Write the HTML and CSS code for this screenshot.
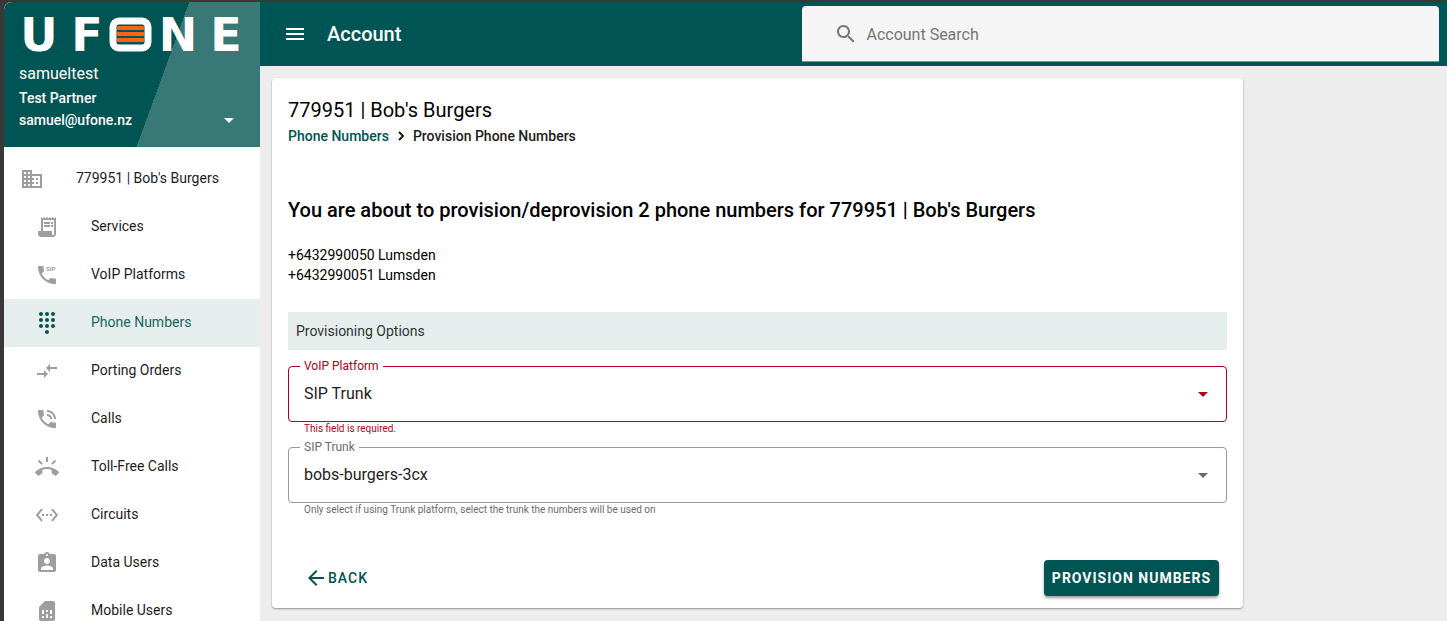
FILE: index.html
```
<!DOCTYPE html>
<html lang="en">
<head>
    <meta charset="UTF-8">
    <meta name="viewport" content="width=device-width, initial-scale=1.0">
    <title>Account</title>
    <link rel="stylesheet" href="styles.css">
</head>
<body>
    <div class="app">
        <aside class="sidebar">
            <div class="profile">
                <svg class="logo" viewBox="0 0 226 36" role="img" aria-label="UFONE">
                    <g class="logo-text">
                        <text x="20" y="35">U</text>
                        <text x="68" y="35">F</text>
                        <text x="159" y="35">N</text>
                        <text x="207" y="35">E</text>
                    </g>
                    <rect x="94" y="5" width="35" height="27" rx="6" fill="none" stroke="#fff" stroke-width="7"/>
                    <g fill="#ff6319">
                        <rect x="98" y="10" width="27" height="4" rx="1"/>
                        <rect x="98" y="16" width="27" height="4" rx="1"/>
                        <rect x="98" y="22" width="27" height="4" rx="1"/>
                    </g>
                </svg>
                <div class="profile-name">samueltest</div>
                <div class="profile-line">Test Partner</div>
                <button class="profile-line profile-menu" type="button">
                    samuel@ufone.nz
                    <svg class="icon" viewBox="0 0 24 24"><path d="M7 10l5 5 5-5z"/></svg>
                </button>
            </div>

            <nav class="nav">
                <a class="nav-item nav-root" href="#">
                    <svg class="icon" viewBox="0 0 24 24"><path d="M12 7V3H2v18h20V7H12zM6 19H4v-2h2v2zm0-4H4v-2h2v2zm0-4H4V9h2v2zm0-4H4V5h2v2zm4 12H8v-2h2v2zm0-4H8v-2h2v2zm0-4H8V9h2v2zm0-4H8V5h2v2zm10 12h-8v-2h2v-2h-2v-2h2v-2h-2V9h8v10zm-2-8h-2v2h2v-2zm0 4h-2v2h2v-2z"/></svg>
                    <span>779951 | Bob's Burgers</span>
                </a>
                <a class="nav-item" href="#">
                    <svg class="icon" viewBox="0 0 24 24"><path d="M19.5 3.5L18 2l-1.5 1.5L15 2l-1.5 1.5L12 2l-1.5 1.5L9 2 7.5 3.5 6 2v14H3v3c0 1.66 1.34 3 3 3h12c1.66 0 3-1.34 3-3V2l-1.5 1.5zM19 19c0 .55-.45 1-1 1s-1-.45-1-1v-3H8V5h11v14z"/><path d="M9 7h6v2H9zM16 7h2v2h-2zM9 10h6v2H9zM16 10h2v2h-2z"/></svg>
                    <span>Services</span>
                </a>
                <a class="nav-item" href="#">
                    <svg class="icon" viewBox="0 0 24 24"><path d="M20 15.5c-1.25 0-2.45-.2-3.57-.57-.35-.11-.74-.03-1.01.24l-2.2 2.2c-2.83-1.44-5.15-3.75-6.59-6.59l2.2-2.21c.27-.26.35-.65.24-1C8.7 6.45 8.5 5.25 8.5 4c0-.55-.45-1-1-1H4c-.55 0-1 .45-1 1 0 9.39 7.61 17 17 17 .55 0 1-.45 1-1v-3.5c0-.55-.45-1-1-1z"/><text class="icon-text" x="11" y="8">SIP</text></svg>
                    <span>VoIP Platforms</span>
                </a>
                <a class="nav-item active" href="#">
                    <svg class="icon" viewBox="0 0 24 24"><circle cx="6" cy="3" r="2"/><circle cx="12" cy="3" r="2"/><circle cx="18" cy="3" r="2"/><circle cx="6" cy="9" r="2"/><circle cx="12" cy="9" r="2"/><circle cx="18" cy="9" r="2"/><circle cx="6" cy="15" r="2"/><circle cx="12" cy="15" r="2"/><circle cx="18" cy="15" r="2"/><circle cx="12" cy="21" r="2"/></svg>
                    <span>Phone Numbers</span>
                </a>
                <a class="nav-item" href="#">
                    <svg class="icon" viewBox="0 0 24 24"><path d="M9.01 14H2v2h7.01v3L13 15l-3.99-4v3zm5.98-1v-3H22V8h-7.01V5L11 9l3.99 4z"/></svg>
                    <span>Porting Orders</span>
                </a>
                <a class="nav-item" href="#">
                    <svg class="icon" viewBox="0 0 24 24"><path d="M20 15.5c-1.25 0-2.45-.2-3.57-.57-.35-.11-.74-.03-1.02.24l-2.2 2.2c-2.83-1.44-5.15-3.75-6.59-6.58l2.2-2.21c.28-.27.36-.66.25-1.01C8.7 6.45 8.5 5.25 8.5 4c0-.55-.45-1-1-1H4c-.55 0-1 .45-1 1 0 9.39 7.61 17 17 17 .55 0 1-.45 1-1v-3.5c0-.55-.45-1-1-1zM19 12h2c0-4.97-4.03-9-9-9v2c3.87 0 7 3.13 7 7zm-4 0h2c0-2.76-2.24-5-5-5v2c1.66 0 3 1.34 3 3z"/></svg>
                    <span>Calls</span>
                </a>
                <a class="nav-item" href="#">
                    <svg class="icon" viewBox="0 0 24 24"><path d="M23.71 16.67C20.66 13.78 16.54 12 12 12 7.46 12 3.34 13.78.29 16.67c-.18.18-.29.43-.29.71 0 .28.11.53.29.71l2.48 2.48c.18.18.43.29.71.29.27 0 .52-.11.7-.28.79-.74 1.69-1.36 2.66-1.85.33-.16.56-.5.56-.9v-3.1c1.45-.48 3-.73 4.6-.73 1.6 0 3.15.25 4.6.72v3.1c0 .39.23.74.56.9.98.49 1.87 1.12 2.67 1.85.18.18.43.28.7.28.28 0 .53-.11.71-.29l2.48-2.48c.18-.18.29-.43.29-.71 0-.28-.12-.52-.3-.7zM21.16 6.26l-1.41-1.41-3.56 3.55 1.41 1.41s3.45-3.52 3.56-3.55zM13 2h-2v5h2V2zM6.4 9.81L7.81 8.4 4.26 4.84 2.84 6.26c.11.03 3.56 3.55 3.56 3.55z"/></svg>
                    <span>Toll-Free Calls</span>
                </a>
                <a class="nav-item" href="#">
                    <svg class="icon" viewBox="0 0 24 24"><path d="M7.77 6.76L6.23 5.48.82 12l5.41 6.52 1.54-1.28L3.42 12l4.35-5.24zM7 13h2v-2H7v2zm10-2h-2v2h2v-2zm-6 2h2v-2h-2v2zm6.77-7.52l-1.54 1.28L20.58 12l-4.35 5.24 1.54 1.28L23.18 12l-5.41-6.52z"/></svg>
                    <span>Circuits</span>
                </a>
                <a class="nav-item" href="#">
                    <svg class="icon" viewBox="0 0 24 24"><path d="M19 3h-4.18C14.4 1.84 13.3 1 12 1c-1.3 0-2.4.84-2.82 2H5c-1.1 0-2 .9-2 2v14c0 1.1.9 2 2 2h14c1.1 0 2-.9 2-2V5c0-1.1-.9-2-2-2zm-7 0c.55 0 1 .45 1 1s-.45 1-1 1-1-.45-1-1 .45-1 1-1zm0 4c1.66 0 3 1.34 3 3s-1.34 3-3 3-3-1.34-3-3 1.34-3 3-3zm6 12H6v-1.4c0-2 4-3.1 6-3.1s6 1.1 6 3.1V19z"/></svg>
                    <span>Data Users</span>
                </a>
                <a class="nav-item" href="#">
                    <svg class="icon" viewBox="0 0 24 24"><path d="M19.99 4c0-1.1-.89-2-1.99-2h-8L4 8v12c0 1.1.9 2 2 2h12.01c1.1 0 1.99-.9 1.99-2l-.01-16zM9 19H7v-2h2v2zm8 0h-2v-2h2v2zm-8-4H7v-4h2v4zm4 4h-2v-4h2v4zm0-6h-2v-2h2v2zm4 2h-2v-4h2v4z"/></svg>
                    <span>Mobile Users</span>
                </a>
            </nav>
        </aside>

        <div class="page">
            <header class="topbar">
                <button class="menu-btn" type="button" aria-label="Menu">
                    <svg class="icon" viewBox="0 0 24 24"><path d="M3 18h18v-2H3v2zm0-5h18v-2H3v2zm0-7v2h18V6H3z"/></svg>
                </button>
                <h1 class="topbar-title">Account</h1>
                <label class="search">
                    <svg class="icon" viewBox="0 0 24 24"><path d="M15.5 14h-.79l-.28-.27C15.41 12.59 16 11.11 16 9.5 16 5.91 13.09 3 9.5 3S3 5.91 3 9.5 5.91 16 9.5 16c1.61 0 3.09-.59 4.23-1.57l.27.28v.79l5 4.99L20.49 19l-4.99-5zm-6 0C7.01 14 5 11.99 5 9.5S7.01 5 9.5 5 14 7.01 14 9.5 11.99 14 9.5 14z"/></svg>
                    <input class="search-input" type="text" placeholder="Account Search" aria-label="Account Search">
                </label>
            </header>

            <main class="content">
                <form class="card">
                    <h2 class="card-title">779951 | Bob's Burgers</h2>
                    <div class="breadcrumb">
                        <a href="#">Phone Numbers</a>
                        <svg class="chevron" viewBox="0 0 8 12"><path d="M2 2l4 4-4 4"/></svg>
                        <span>Provision Phone Numbers</span>
                    </div>

                    <h3 class="summary">You are about to provision/deprovision 2 phone numbers for 779951 | Bob's Burgers</h3>
                    <ul class="numbers">
                        <li>+6432990050 Lumsden</li>
                        <li>+6432990051 Lumsden</li>
                    </ul>

                    <div class="section-title">Provisioning Options</div>

                    <div class="field invalid">
                        <div class="field-box">
                            <label class="field-label" for="platform">VoIP Platform</label>
                            <select class="field-select" id="platform">
                                <option>SIP Trunk</option>
                            </select>
                            <svg class="field-arrow" viewBox="0 0 10 5"><path d="M0 0h10L5 5z"/></svg>
                        </div>
                        <div class="helper">This field is required.</div>
                    </div>
                    <div class="field">
                        <div class="field-box">
                            <label class="field-label" for="trunk">SIP Trunk</label>
                            <select class="field-select" id="trunk">
                                <option>bobs-burgers-3cx</option>
                            </select>
                            <svg class="field-arrow" viewBox="0 0 10 5"><path d="M0 0h10L5 5z"/></svg>
                        </div>
                        <div class="helper">Only select if using Trunk platform, select the trunk the numbers will be used on</div>
                    </div>

                    <div class="actions">
                        <button class="btn btn-text" type="button">
                            <svg class="icon" viewBox="0 0 24 24"><path d="M20 11H7.83l5.59-5.59L12 4l-8 8 8 8 1.41-1.41L7.83 13H20v-2z"/></svg>
                            BACK
                        </button>
                        <button class="btn btn-primary" type="button">PROVISION NUMBERS</button>
                    </div>
                </form>
            </main>
        </div>
    </div>
</body>
</html>
```

FILE: styles.css
```
* {
    box-sizing: border-box;
}

body {
    margin: 0;
    height: 100vh;
    padding: 2px 0 0 4px;
    overflow: hidden;
    background-color: #3a3836;
    font-family: Roboto, sans-serif;
    font-size: 14px;
    line-height: 20px;
    color: #000;
}

button, input, select {
    font-family: inherit;
}

.app {
    display: flex;
    height: 100%;
    border-top-left-radius: 8px;
    overflow: hidden;
    background-color: #ededed;
}

.icon {
    width: 24px;
    height: 24px;
    flex: none;
    fill: currentColor;
}

/* sidebar */
.sidebar {
    flex: none;
    width: 256px;
    background-color: #fff;
    overflow: hidden;
}

.profile {
    height: 145px;
    padding: 14px 15px 0;
    background: linear-gradient(110deg, #005453 60%, #387876 60%);
    color: #fff;
}

.logo {
    display: block;
    width: 226px;
    height: 36px;
    overflow: visible;
}

.logo-text {
    font-family: "DejaVu Sans", sans-serif;
    font-size: 46px;
    font-weight: bold;
    text-anchor: middle;
    fill: #fff;
}

.profile-name {
    margin-top: 12px;
    font-size: 16px;
}

.profile-line {
    height: 22px;
    margin-top: 3px;
    font-size: 14px;
    font-weight: 500;
    line-height: 22px;
}

.profile-menu {
    display: flex;
    align-items: center;
    justify-content: space-between;
    width: 100%;
    margin-top: 0;
    padding: 0 4px 0 0;
    border: none;
    background: none;
    color: #fff;
    cursor: pointer;
}

.nav {
    padding-top: 8px;
}

.nav-item {
    display: flex;
    align-items: center;
    gap: 32px;
    height: 48px;
    padding: 0 31px;
    color: #1c1c1c;
    text-decoration: none;
    white-space: nowrap;
}

.nav-item .icon {
    color: #9e9e9e;
}

.nav-item span {
    padding-bottom: 2px;
}

.nav-root {
    padding: 0 16px;
}

.nav-item.active {
    background-color: #e5eeed;
    color: #1a6563;
}

.nav-item.active .icon {
    color: #005453;
}

.icon-text {
    font-size: 6px;
    font-weight: bold;
}

/* top bar */
.page {
    flex: 1;
    min-width: 0;
}

.topbar {
    display: flex;
    align-items: center;
    height: 64px;
    padding: 0 8px 0 11px;
    background-color: #005453;
    color: #fff;
}

.menu-btn {
    display: flex;
    padding: 12px;
    border: none;
    background: none;
    color: #fff;
    cursor: pointer;
}

.topbar-title {
    flex: 1;
    margin: 0 0 0 8px;
    font-size: 20px;
    font-weight: 500;
    line-height: 32px;
}

.search {
    display: flex;
    align-items: center;
    gap: 8px;
    width: 54.5%;
    height: 56px;
    padding: 0 32px;
    border-bottom: 1px solid #8e8e8e;
    border-radius: 4px 4px 0 0;
    background-color: #f5f5f5;
    color: #757575;
}

.search-input {
    flex: 1;
    padding: 2px 0 0;
    border: none;
    outline: none;
    background: none;
    font-size: 16px;
}

.search-input::placeholder {
    color: #757575;
}

/* card */
.content {
    padding: 12px;
}

.card {
    width: 83.5%;
    padding: 16px 16px 12px;
    border-radius: 4px;
    background-color: #fff;
    box-shadow: 0 1px 2px rgba(0, 0, 0, 0.4);
}

.card-title {
    margin: 0;
    font-size: 20px;
    font-weight: 400;
    line-height: 32px;
}

.breadcrumb {
    display: flex;
    align-items: center;
    gap: 8px;
    font-weight: 500;
    color: #1c1c1c;
}

.breadcrumb a {
    color: #005453;
    text-decoration: none;
}

.chevron {
    width: 8px;
    height: 12px;
    fill: none;
    stroke: currentColor;
    stroke-width: 2;
}

.summary {
    margin: 48px 0 0;
    font-size: 20px;
    font-weight: 500;
    line-height: 32px;
}

.numbers {
    margin: 19px 0 0;
    padding: 0;
    list-style: none;
}

.section-title {
    margin: 27px 0 16px;
    padding: 9px 8px;
    background-color: #e5eeed;
    color: #333;
}

.field {
    margin-bottom: 12px;
    color: #6b6b6b;
}

.field-box {
    position: relative;
}

.field-label {
    position: absolute;
    top: -8px;
    left: 12px;
    padding: 0 4px;
    background-color: #fff;
    font-size: 12px;
    line-height: 16px;
}

.field-select {
    display: block;
    width: 100%;
    height: 56px;
    padding: 0 40px 2px 15px;
    border: 1px solid #9a9a9a;
    border-radius: 4px;
    outline: none;
    appearance: none;
    background-color: #fff;
    font-size: 16px;
    color: #212121;
}

.field-arrow {
    position: absolute;
    top: 26px;
    right: 19px;
    width: 10px;
    height: 5px;
    fill: currentColor;
    pointer-events: none;
}

.helper {
    padding: 0 16px;
    font-size: 10px;
    line-height: 13px;
}

.invalid {
    color: #b00020;
}

.invalid .field-select {
    border-color: #b00020;
}

/* form buttons */
.actions {
    display: flex;
    align-items: center;
    justify-content: space-between;
    margin-top: 44px;
    padding: 0 8px;
}

.btn {
    display: flex;
    align-items: center;
    height: 36px;
    padding: 0 8px;
    border: none;
    border-radius: 4px;
    font-size: 14px;
    font-weight: 500;
    letter-spacing: 1px;
    cursor: pointer;
}

.btn-text {
    background: none;
    color: #005453;
}

.btn-primary {
    background-color: #005453;
    color: #fff;
    font-weight: 700;
    box-shadow: 0 2px 3px rgba(0, 0, 0, 0.4);
}
```
